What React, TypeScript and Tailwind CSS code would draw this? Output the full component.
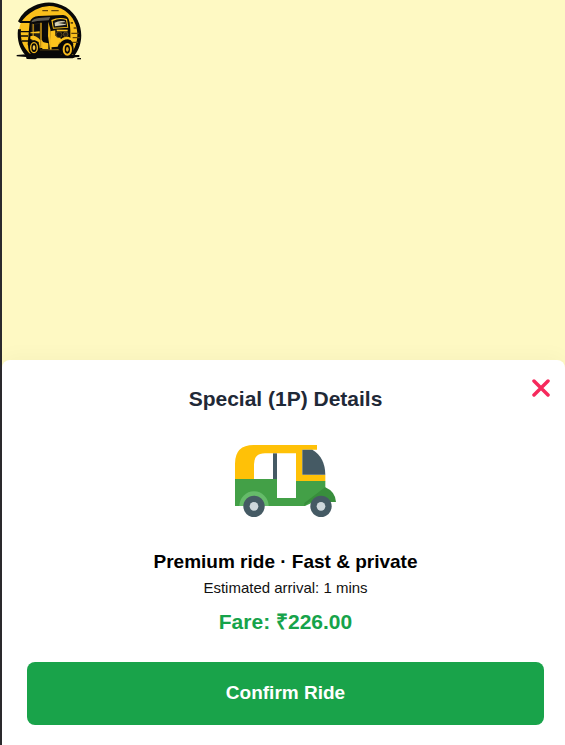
function Logo() {
  return (
    <svg viewBox="48 0 204 186" className="block h-[62px] w-[68px]" role="img" aria-label="Auto rickshaw logo">
      <path d="M78 165C46 126 50 62 88 34C126 6 182 8 214 38C244 70 244 130 218 165Z" fill="#f9bf1b" />
      <path d="M54 64A94 92 0 0 1 100 19Q150-5 198 22C256 60 252 132 224 166L212 162C242 124 240 64 195 32Q150 6 106 29Q76 46 64 66Z" fill="#080808" />
      <path d="M54 88C50 122 60 148 76 165H94C68 144 60 118 63 88Z" fill="#080808" />
      <path d="M54 63H92V69H60ZM62 93H88V97H62ZM62 106H84V110H62ZM66 121H84V125H66Z" fill="#080808" />
      <path d="M127 30H144V34H127ZM154 30H176V34H154ZM212 66H219V71H212ZM221 82H230V86H221ZM214 98H236V102H214ZM218 111H239V115H218ZM216 125H234V129H216Z" fill="#60430a" />
      <path d="M50 165Q120 158 215 165H238V171L226 172L218 175H112L106 178L80 177L78 171L50 169Z" fill="#080808" />
      <path d="M232 174H243V178H232Z" fill="#080808" />
      <path d="M89 66Q95 49 116 48L190 45Q206 47 209 67L211 90V118L220 132L216 156L180 165L92 163L83 133Z" fill="#080808" />
      <path d="M94 67Q98 55 117 54L151 51L146 61L112 63Z" fill="#5d5b52" />
      <path d="M94 72L99 69V126H94ZM103 71L120 69V121H103Z" fill="#242016" />
      <path d="M98 72H101V124H98ZM121 68H125V119L131 128V144H121Z" fill="#e9ad1c" />
      <path d="M104 74L119 71V96H104ZM130 70L144 68V111H130Z" fill="#0b0b0b" />
      <path d="M145 65L151 88L155 150H150L144 108Z" fill="#f2b91c" />
      <path d="M91 97L119 94V100H91ZM91 109Q107 103 121 121V145H116V126L91 117Z" fill="#fbc21c" />
      <path d="M154 60Q177 49 201 57L205 83L159 86Z" fill="#fbc21c" />
      <path d="M158 63Q179 53 198 60L202 81L161 83Z" fill="#111" />
      <path d="M164 68Q179 60 194 64L198 74L165 79Z" fill="#d5d0b6" />
      <path d="M174 69L195 66L198 73Z" fill="#29261f" />
      <path d="M151 94L166 91L166 107L180 114L185 118Q176 130 173 140L153 142Z" fill="#fbc21c" />
      <path d="M127 126L145 130V147H127ZM178 123Q187 109 205 110Q216 113 217 122L204 118Q187 118 178 133Z" fill="#fbc21c" />
      <path d="M170 89H203V94H170Z" fill="#fbc21c" />
      <circle cx="177" cy="104" r="9" fill="#17150f" stroke="#7b6120" strokeWidth="2" />
      <circle cx="197" cy="103" r="7" fill="#272116" stroke="#806528" strokeWidth="2" />
      <ellipse cx="102" cy="143" rx="17" ry="22" fill="#080808" />
      <ellipse cx="102" cy="143" rx="10" ry="15" fill="none" stroke="#f5b91c" strokeWidth="4" />
      <ellipse cx="102" cy="143" rx="4" ry="7" fill="#f5c64c" />
      <ellipse cx="201" cy="147" rx="20" ry="25" fill="#080808" />
      <ellipse cx="202" cy="148" rx="11" ry="16" fill="none" stroke="#f5b91c" strokeWidth="6" />
      <ellipse cx="202" cy="148" rx="4" ry="7" fill="#dca51d" />
      <path d="M120 149L174 147L179 151H120Z" fill="#806018" />
    </svg>
  );
}

function Rickshaw() {
  return (
    <svg viewBox="30 30 303 216" className="block h-[72px] w-[101px]" role="img" aria-label="Auto rickshaw">
      <path d="M30 133V86Q30 30 86 30H276V44H232V119H301V139H213V55H120Q87 55 87 88V133Z" fill="#ffc107" />
      <path d="M144 55H156V133H144Z" fill="#455a64" />
      <path d="M30 132H156V189H213V138H301V159L290 190L240 213H30Z" fill="#43a047" />
      <path d="M301 157Q331 170 333 201H253L238 213V204L300 157Z" fill="#388e3c" />
      <path d="M43 213A44 44 0 0 1 131 213Z" fill="#66bb6a" />
      <path d="M232 44H262Q300 66 301 119H232Z" fill="#455a64" />
      <circle cx="87" cy="214" r="32" fill="#455a64" />
      <circle cx="87" cy="214" r="13" fill="#cfd8dc" />
      <circle cx="288" cy="214" r="32" fill="#455a64" />
      <circle cx="288" cy="214" r="13" fill="#cfd8dc" />
    </svg>
  );
}

export default function App() {
  return (
    <div className="flex min-h-screen flex-col border-l-2 border-[#2b2a2d] bg-[#fef9c3] font-['Liberation_Sans',Arial,sans-serif]">
      <header className="flex-1 pl-[14px]">
        <Logo />
      </header>
      <main className="relative flex flex-col items-center rounded-t-lg bg-white pt-[25px] pr-[21px] pb-5 pl-[25px] shadow-[0_-4px_20px_rgba(0,0,0,0.03)]">
        <button type="button" aria-label="Close" className="absolute top-[19px] right-[15px] text-[#f6295c]">
          <svg viewBox="0 0 18 18" className="block size-[18px]" fill="none" stroke="currentColor" strokeWidth="3.5" strokeLinecap="round">
            <path d="M2 2L16 16M16 2L2 16" />
          </svg>
        </button>
        <h1 className="text-[21px] leading-[28px] font-bold text-[#1f2937]">Special (1P) Details</h1>
        <div className="pt-8 pb-[31px]">
          <Rickshaw />
        </div>
        <p className="text-[19px] leading-[28px] font-bold text-black">Premium ride · Fast &amp; private</p>
        <p className="text-[15px] leading-[24px] text-[#111111]">Estimated arrival: 1 mins</p>
        <p className="mt-2 text-[21px] leading-[28px] font-bold text-[#16a34a]">Fare: ₹226.00</p>
        <button type="button" className="mt-[26px] h-[63px] w-full rounded-lg bg-[#19a34a] text-[19px] font-bold text-white">
          Confirm Ride
        </button>
      </main>
    </div>
  );
}
